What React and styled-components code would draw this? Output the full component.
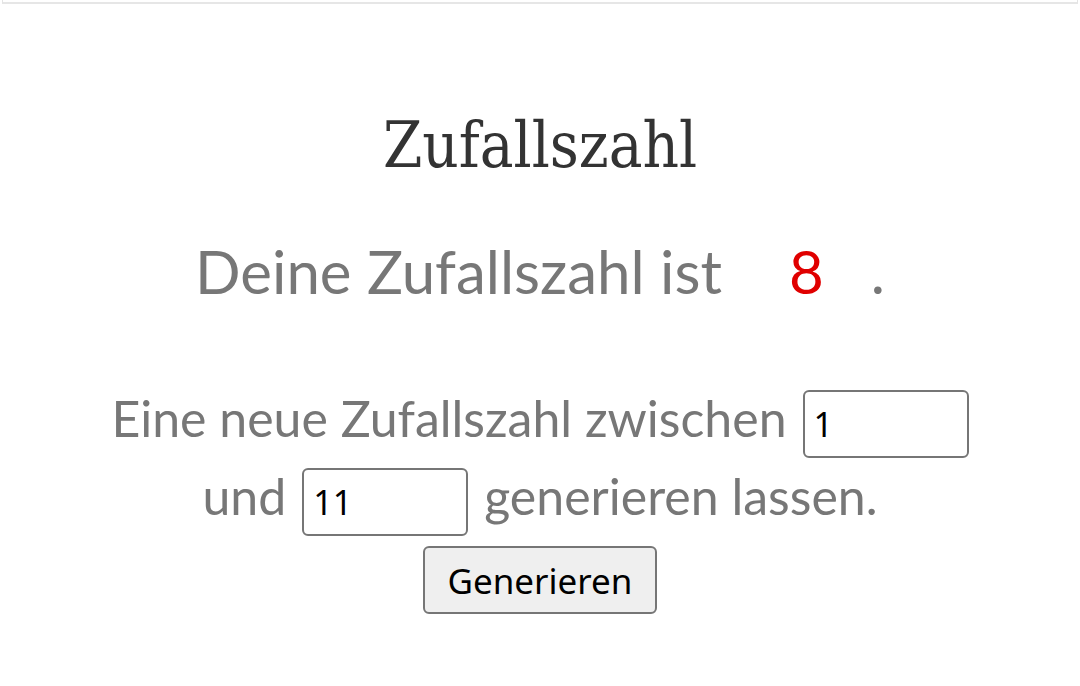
import React, { useState } from "react";
import styled, { createGlobalStyle } from "styled-components";

const GlobalStyle = createGlobalStyle`
  html, body {
    margin: 0;
    padding: 0;
    background: #ffffff;
  }
  body {
    font-family: "Lato", "Noto Sans", sans-serif;
  }
`;

const TopBar = styled.div`
  height: 2px;
  margin: 0 2px;
  border: 1px solid #e4e4e4;
  border-top: none;
  border-bottom: 2px solid #e6e6e6;
`;

const Page = styled.main`
  text-align: center;
  padding-top: 110px;
`;

const Title = styled.h1`
  margin: 0;
  font-family: "DejaVu Serif", serif;
  font-stretch: semi-condensed;
  font-weight: 400;
  font-size: 63px;
  line-height: 63px;
  color: #333333;
`;

const Result = styled.p`
  margin: 58px 0 0;
  font-size: 60px;
  line-height: 1.2;
  color: #777777;
`;

const Number = styled.span`
  color: #e00000;
  margin: 0 47px 0 67px;
`;

const Range = styled.p`
  width: 880px;
  margin: 73px auto 0;
  font-size: 50px;
  line-height: 77px;
  color: #777777;
`;

const NumInput = styled.input`
  box-sizing: border-box;
  width: 166px;
  height: 68px;
  margin: 0 ${({ $right }) => ($right ? "16px" : "0")} 0 16px;
  padding: 0 9px;
  border: 2px solid #767676;
  border-radius: 6px;
  font-family: "Noto Sans", sans-serif;
  font-size: 34px;
  color: #000000;
  background: #ffffff;
  outline: none;
`;

const ButtonRow = styled.div`
  margin-top: 10px;
  text-align: center;
`;

const Button = styled.button`
  box-sizing: border-box;
  width: 234px;
  height: 68px;
  padding: 0;
  border: 2px solid #767676;
  border-radius: 6px;
  background: #efefef;
  font-family: "Noto Sans", sans-serif;
  font-size: 35px;
  color: #000000;
  cursor: pointer;
`;

const randomBetween = (a, b) => {
  const lo = Math.min(a, b);
  const hi = Math.max(a, b);
  return Math.floor(Math.random() * (hi - lo + 1)) + lo;
};

export default function App() {
  const [min, setMin] = useState("1");
  const [max, setMax] = useState("11");
  const [value, setValue] = useState(8);

  const generate = () => {
    const a = parseInt(min, 10);
    const b = parseInt(max, 10);
    if (!isNaN(a) && !isNaN(b)) setValue(randomBetween(a, b));
  };

  return (
    <>
      <GlobalStyle />
      <TopBar />
      <Page>
        <Title>Zufallszahl</Title>
        <Result>
          Deine Zufallszahl ist<Number>{value}</Number>.
        </Result>
        <Range>
          Eine neue Zufallszahl zwischen
          <NumInput value={min} onChange={(e) => setMin(e.target.value)} /> und
          <NumInput $right value={max} onChange={(e) => setMax(e.target.value)} />
          generieren lassen.
        </Range>
        <ButtonRow>
          <Button onClick={generate}>Generieren</Button>
        </ButtonRow>
      </Page>
    </>
  );
}
